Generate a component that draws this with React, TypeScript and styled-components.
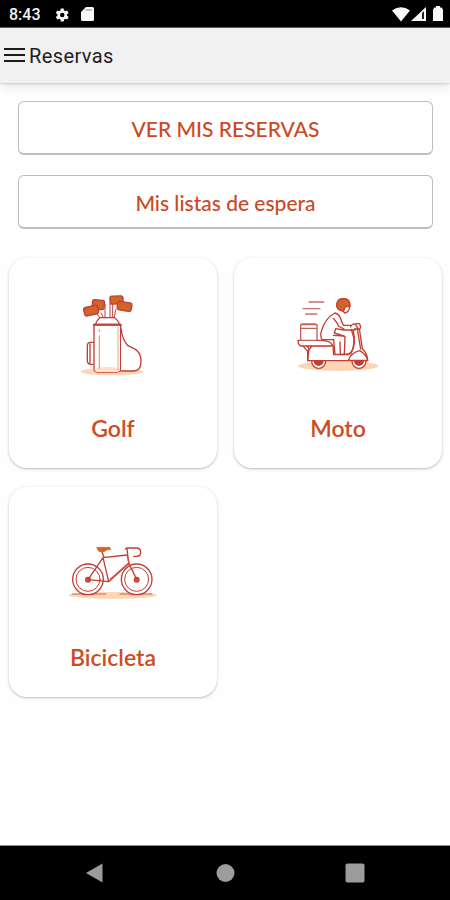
import React from 'react';
import styled, { createGlobalStyle } from 'styled-components';

const red = '#c23e34';
const orange = '#d2642a';
const sand = '#fbd5b5';

const GlobalStyle = createGlobalStyle`
  * { box-sizing: border-box; }
  body { margin: 0; background: #fefefe; }
`;

const Screen = styled.div`
  display: flex;
  flex-direction: column;
  width: 450px;
  height: 900px;
  overflow: hidden;
  background: #fefefe;
  font-family: Lato, sans-serif;
`;

const StatusBar = styled.div`
  display: flex;
  flex: none;
  align-items: center;
  height: 28px;
  padding: 2px 7px 0 9px;
  background: #000;
  border-bottom: 1px solid #5c5c5c;
  color: #f4f4f4;
  font: 500 16px/26px Roboto, sans-serif;
`;

const Clock = styled.span`
  width: 45px;
`;

const StatusIcon = styled.svg<{ $w: number; $gap?: number }>`
  display: block;
  flex: none;
  width: ${(p) => p.$w}px;
  height: 18px;
  margin-left: ${(p) => p.$gap ?? 0}px;
  fill: #f8f8f8;
`;

const Spacer = styled.div`
  flex: 1;
`;

const Header = styled.header`
  display: flex;
  flex: none;
  align-items: center;
  height: 55px;
  padding-left: 4px;
  background: #f1f1f1;
  box-shadow: 0 1px 2px rgba(0, 0, 0, 0.15), 0 5px 9px rgba(0, 0, 0, 0.08);
`;

const MenuIcon = styled.svg`
  width: 21px;
  height: 18px;
  margin: -1px 4px 0 0;
  stroke: #1c1c1c;
  stroke-width: 2;
`;

const Title = styled.h1`
  margin: 0;
  color: #1e1e1e;
  font: 400 20px/24px Roboto, sans-serif;
  letter-spacing: 0.4px;
`;

const Content = styled.main`
  flex: 1;
  padding: 18px 8px 0 9px;
`;

const Actions = styled.div`
  display: flex;
  flex-direction: column;
  gap: 20px;
  padding: 0 9px;
`;

const ActionButton = styled.button`
  height: 54px;
  padding: 2px 0 0;
  border: 1px solid #bdbdbf;
  border-bottom: 2px solid #bcbdbf;
  border-radius: 6px;
  background: #fff;
  color: #cc491f;
  font: 500 21px/24px Lato, sans-serif;
`;

const Grid = styled.div`
  display: grid;
  grid-template-columns: 208px 208px;
  justify-content: space-between;
  row-gap: 19px;
  margin-top: 29px;
`;

const Card = styled.article`
  display: flex;
  flex-direction: column;
  align-items: center;
  height: 210px;
  padding-top: 27px;
  border-radius: 18px;
  background: #fff;
  box-shadow: 0 1px 3px rgba(0, 0, 0, 0.23), 0 1px 1px rgba(0, 0, 0, 0.05);
`;

const Drawing = styled.svg`
  display: block;
  height: 100px;
  fill: none;
  stroke: ${red};
  stroke-width: 4;
  stroke-linecap: round;
  stroke-linejoin: round;
`;

const CardLabel = styled.span`
  margin-top: 29px;
  color: #cc4d22;
  font-size: 23px;
  font-weight: 600;
  line-height: 28px;
`;

const NavBar = styled.nav`
  display: flex;
  flex: none;
  align-items: center;
  justify-content: space-between;
  height: 55px;
  padding: 0 85px;
  border-top: 1px solid #8a8a8a;
  background: #000;
`;

const NavIcon = styled.svg`
  width: 20px;
  height: 20px;
  fill: #9c9c9c;
`;

const GolfDrawing = () => (
  <Drawing width="86" viewBox="0 0 258 300">
    <ellipse cx="126" cy="260" rx="94" ry="11" fill={sand} stroke="none" />
    <path d="M72 120h80v130q0 11-11 11H83q-11 0-11-11z" fill="#fff" />
    <path d="M74 250q40-8 76 0v3q0 8-9 8H83q-9 0-9-8z" fill="#fbe0c9" stroke="none" />
    <path d="M76 118q3-12 14-20h44q11 8 15 20z" fill="#fff" />
    <path d="M71 119h82" strokeWidth="5" />
    <path d="M81 86l8 12M93 84l7 14M105 58v39M120 57v40M137 74l-4 23M128 55v40" strokeWidth="3" />
    <path d="M153 132q4 33 21 50c15 8 39 12 39 47q0 29-22 29h-38" fill="#fff" />
    <path d="M70 172h-8q-10 0-10 10v44q0 12 10 12h8M60 177v56" />
    <path d="M88 133v7M88 153v97" stroke="#e2a188" />
    <path d="M144 126v128" stroke="#dea69a" strokeWidth="3" />
    <rect x="67" y="45" width="36" height="28" rx="6" fill={orange} transform="rotate(4 85 59)" />
    <rect x="42" y="64" width="43" height="26" rx="7" fill={orange} transform="rotate(-13 63 77)" />
    <rect x="120" y="33" width="39" height="24" rx="6" fill={orange} transform="rotate(-2 139 45)" />
    <rect x="142" y="51" width="43" height="26" rx="7" fill={orange} transform="rotate(9 163 64)" />
  </Drawing>
);

const MotoDrawing = () => (
  <Drawing width="106" viewBox="0 0 318 300">
    <ellipse cx="160" cy="243" rx="120" ry="15" fill={sand} stroke="none" />
    <path d="M72 51h44M54 71h51M62 87h33" stroke="#cf6d68" />
    <circle cx="101" cy="229" r="21" fill="#fff" />
    <circle cx="222" cy="229" r="21" fill="#fff" />
    <path d="M88 228a13 13 0 0 0 26 0zM209 228a13 13 0 0 0 26 0z" fill={red} />
    <path d="M68 227h180q0-21-16-36l-9-60-20-5 5 30q3 40-18 53h-44l-2-27H65l7 9z" fill="#fff" />
    <path d="M53 182l15 17v28M82 182l-14 17" />
    <path d="M39 166h72q25 2 31 13l-4 4H48q-9-3-9-17z" fill="#fff" />
    <path d="M47 119h49v47H47zM47 130h49M51 117h41" fill="#fff" stroke="#c76059" />
    <path d="M150 84q-31 16-42 58-2 17 4 22h34l4 44h28l2-54-32-10 4-13 24 4h34V121h-35L166 99q-4-12-16-15z" fill="#fff" />
    <path d="M146 101q10 10 14 22l17 9M165 171l1 37M145 151l31 2" />
    <path d="M197 126q5-13 15-7l8 14M213 116h10q7 11 1 16h-15" fill="#fff" />
    <path d="M199 133l8 28q0 28-10 45l-31 3M217 133l10 59M190 226q8-23 34-29 21 12 24 29z" />
    <path d="M158 61q0-20 18-20t18 18q1 22-15 25z" fill="#fff" />
    <path d="M155 65q-2-24 19-24 22 0 21 24l-14-1-5 14q-17 0-21-13z" fill={orange} />
  </Drawing>
);

const Wheel = ({ cx }: { cx: number }) => (
  <>
    <circle cx={cx} cy="148" r="46" />
    <circle cx={cx} cy="148" r="36" strokeWidth="3" />
    <circle cx={cx} cy="149" r="7" fill={orange} />
  </>
);

const BikeDrawing = () => (
  <Drawing width="106" viewBox="0 -48 318 300">
    <ellipse cx="158" cy="196" rx="134" ry="10" fill={sand} stroke="none" />
    <path d="M37 192h100M180 192h96" stroke="#d88c72" />
    <circle cx="84" cy="148" r="44" fill="#fff" stroke="none" />
    <circle cx="230" cy="148" r="44" fill="#fff" stroke="none" />
    <Wheel cx={84} />
    <Wheel cx={230} />
    <path d="M84 149l45-66 72-8M84 149l62 6 61-55M129 83l17 71M125 63l7 19M201 56l5 43 24 49" />
    <path d="M202 78l5 20-56 50" stroke="#cf5442" />
    <path d="M197 58q0-4 4-4h27q14 0 14 13 0 12-13 12h-8" />
    <path d="M111 52h39l2 6q-13 1-20 7h-14q-7-4-7-13z" fill={orange} stroke={orange} strokeWidth="2" />
  </Drawing>
);

export default function App() {
  return (
    <>
      <GlobalStyle />
      <Screen>
        <StatusBar>
          <Clock>8:43</Clock>
          <StatusIcon $w={15} viewBox="2 1 20 22">
            <path
              fillRule="evenodd"
              d="M19.4 13a7.8 7.8 0 0 0 0-2l2.1-1.6-2-3.5-2.5 1a7.3 7.3 0 0 0-1.7-1L15 3.2h-4l-.4 2.7a7.3 7.3 0 0 0-1.7 1l-2.5-1-2 3.5L6.600 11a7.8 7.8 0 0 0 0 2l-2.200 1.600 2 3.500 2.500-1a7.3 7.3 0 0 0 1.700 1l.4 2.700h4l.4-2.700a7.3 7.3 0 0 0 1.700-1l2.500 1 2-3.500zM13 15a3 3 0 1 1 0-6 3 3 0 0 1 0 6z"
            />
          </StatusIcon>
          <StatusIcon $w={13} $gap={12} viewBox="0 0 13 18">
            <path d="M5 1h6.500q1.500 0 1.500 1.500v11q0 1.500-1.500 1.500h-10Q0 15 0 13.500V6z" />
            <path d="M4.500 4h6.500" stroke="#888" />
          </StatusIcon>
          <Spacer />
          <StatusIcon $w={18} viewBox="0 0 18 18">
            <path d="M0 4.500Q9-2 18 4.500L9 15.500z" />
          </StatusIcon>
          <StatusIcon $w={15} $gap={1} viewBox="0 0 15 18">
            <path d="M15 1v14H0z" />
            <path d="M11 7v6h2V5z" fill="#222" />
          </StatusIcon>
          <StatusIcon $w={10} $gap={7} viewBox="0 0 10 18">
            <path d="M3 0h4v1.500h1.500L10 3.500V15H0V3.500l1.500-2H3z" />
          </StatusIcon>
        </StatusBar>
        <Header>
          <MenuIcon viewBox="0 0 21 18">
            <path d="M0 3h21M0 9h21M0 15h21" />
          </MenuIcon>
          <Title>Reservas</Title>
        </Header>
        <Content>
          <Actions>
            <ActionButton>VER MIS RESERVAS</ActionButton>
            <ActionButton>Mis listas de espera</ActionButton>
          </Actions>
          <Grid>
            <Card>
              <GolfDrawing />
              <CardLabel>Golf</CardLabel>
            </Card>
            <Card>
              <MotoDrawing />
              <CardLabel>Moto</CardLabel>
            </Card>
            <Card>
              <BikeDrawing />
              <CardLabel>Bicicleta</CardLabel>
            </Card>
          </Grid>
        </Content>
        <NavBar>
          <NavIcon viewBox="0 0 20 20">
            <path d="M1 10L17.500 0.500v19z" />
          </NavIcon>
          <NavIcon viewBox="0 0 20 20">
            <circle cx="10.500" cy="10" r="9" />
          </NavIcon>
          <NavIcon viewBox="0 0 20 20">
            <rect x="0.500" y="0.500" width="19" height="19" rx="2" />
          </NavIcon>
        </NavBar>
      </Screen>
    </>
  );
}
